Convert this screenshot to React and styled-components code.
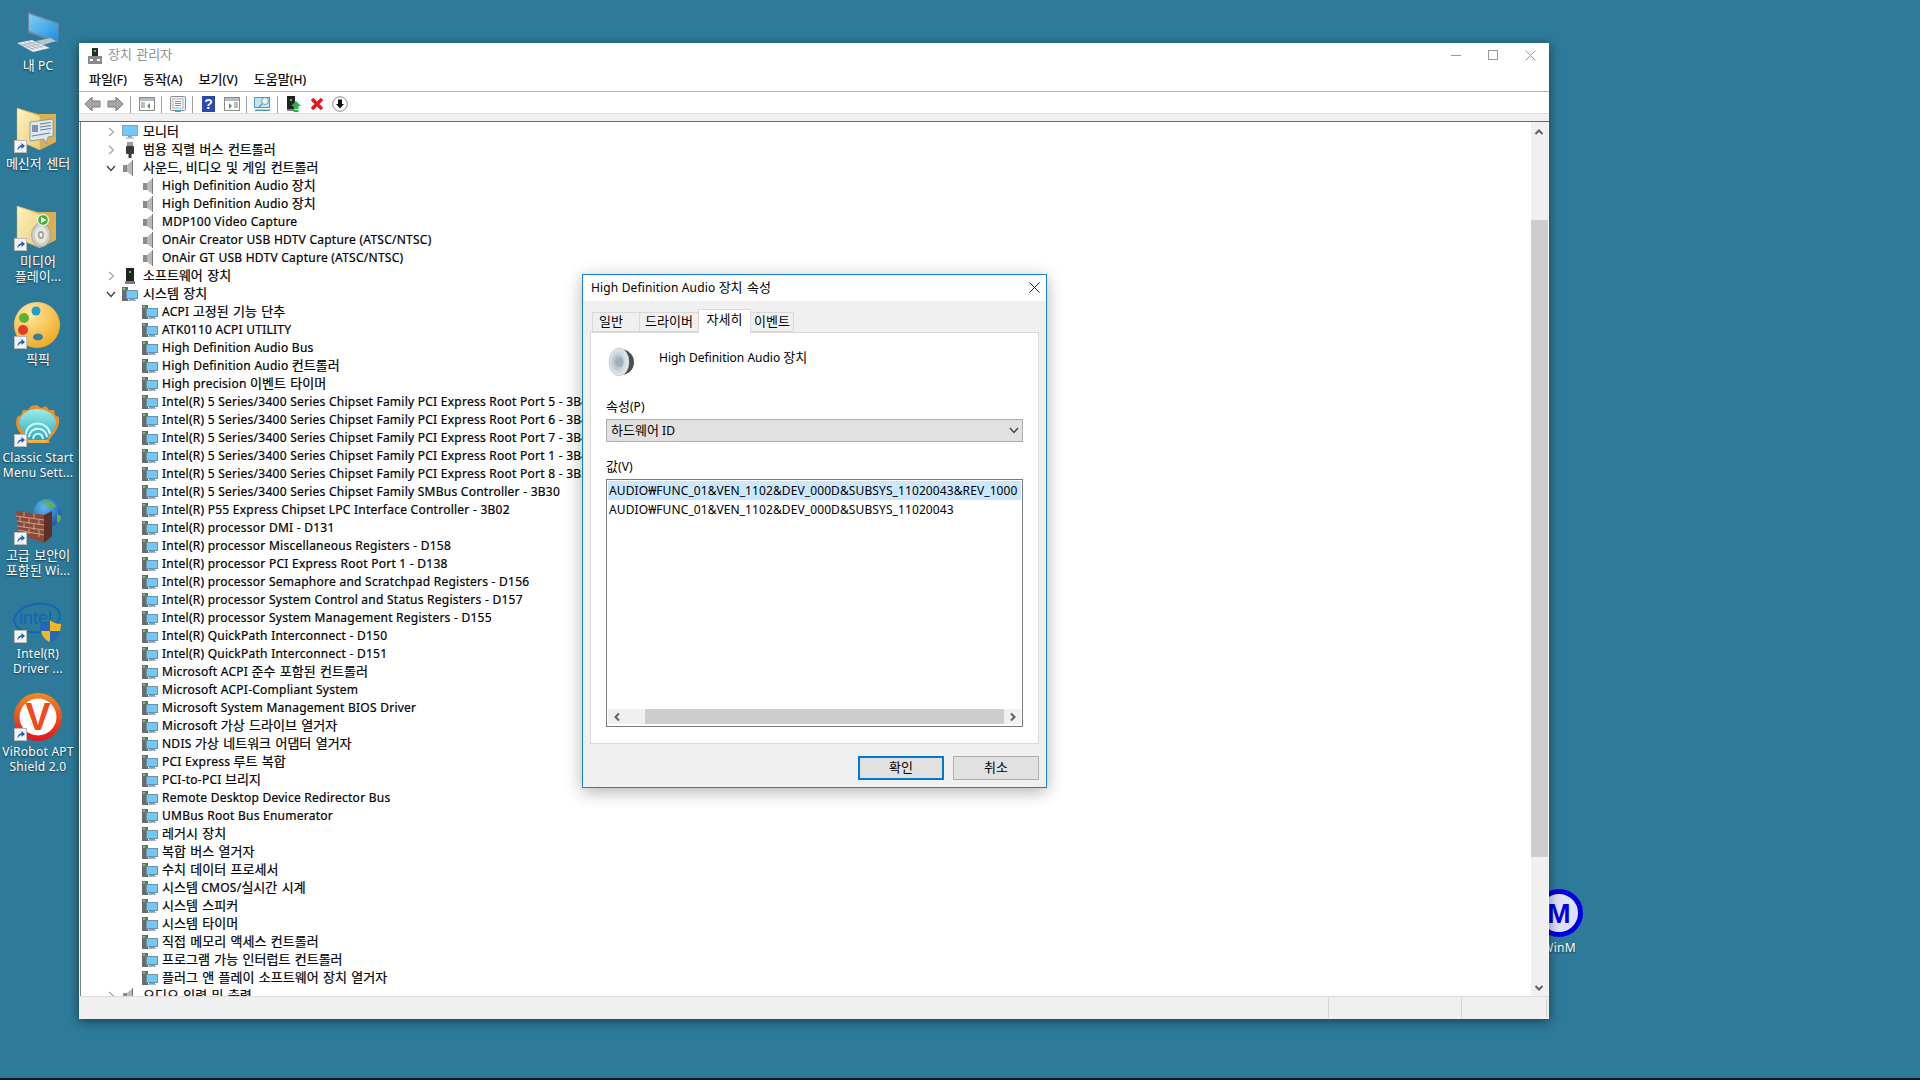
import React from "react";
import styled, { createGlobalStyle } from "styled-components";

const GlobalStyle = createGlobalStyle`
  html, body { margin: 0; padding: 0; height: 100%; overflow: hidden; }
  body {
    font-family: "Noto Sans", "Noto Sans CJK KR", sans-serif;
    font-size: 12px;
    letter-spacing: 0.25px;
    color: #000;
  }
  * { box-sizing: border-box; }
`;

/* Hangul runs are set a size up, the reference font draws them wider */
const Hangul = styled.span`
  font-size: 13px;
  line-height: 0;
  letter-spacing: 0;
  word-spacing: 1px;
`;

const Txt = ({ children }) => (
  <>
    {children.split(/([가-힣]+(?: [가-힣]+)*)/).map((part, i) =>
      i % 2 ? <Hangul key={i}>{part}</Hangul> : part
    )}
  </>
);

/* ---------- icons ---------- */

const Shortcut = () => (
  <ShortcutBadge>
    <svg width="13" height="13" viewBox="0 0 13 13">
      <rect x="0.5" y="0.5" width="12" height="12" fill="#f4f4f4" stroke="#b8b8b8" />
      <path d="M3.5 10.5 C3.5 7 5 5.5 7.5 5.2 L7.5 3 L11 6 L7.5 9 L7.5 7 C6 7 5 8 3.5 10.5 Z" fill="#1c5fb8" />
    </svg>
  </ShortcutBadge>
);

const PcIcon = () => (
  <svg width="48" height="48" viewBox="0 0 48 48">
    <defs>
      <linearGradient id="pcScreen" x1="0" y1="0" x2="1" y2="1">
        <stop offset="0" stopColor="#7fd0f7" />
        <stop offset="1" stopColor="#1d8fdc" />
      </linearGradient>
    </defs>
    <polygon points="14,2 45,13 44,33 14,23" fill="#6f8796" />
    <polygon points="15,4 44,14 43,31 15,21" fill="url(#pcScreen)" />
    <polygon points="22,31 36,28 42,31 29,35" fill="#b8c4cc" />
    <polygon points="3,33 18,30 36,38 19,42" fill="#e6eaec" />
    <path d="M6 33.5 L20 39.5 M10 32.5 L24 38.5 M14 31.5 L28 37.5 M8 35 L22 32 M12 37 L27 33.5 M16 39 L31 35.5" stroke="#9aa6ad" strokeWidth="0.7" />
  </svg>
);

const FolderBase = ({ id, children }) => (
  <svg width="48" height="48" viewBox="0 2 48 48">
    <defs>
      <linearGradient id={id} x1="0" y1="0" x2="1" y2="1">
        <stop offset="0" stopColor="#fff4bf" />
        <stop offset="1" stopColor="#eccb7a" />
      </linearGradient>
    </defs>
    <polygon points="3,2 24,8 42,8 42,36 26,44 3,34" fill="#dcb050" />
    <polygon points="3,2 26,10 26,44 3,34" fill={`url(#${id})`} stroke="#d2a750" strokeWidth="0.5" />
    {children}
  </svg>
);

const MessengerFolderIcon = () => (
  <FolderBase id="folderA">
    <polygon points="16,16 39,13 39,30 34,31 32,38 30,33 16,35" fill="#dfe8ee" stroke="#7d8f9a" strokeWidth="0.8" />
    <rect x="18" y="19" width="6" height="7" fill="#7c93a8" />
    <path d="M26 18 L37 16.500 M26 21 L37 19.500 M26 24 L37 22.500 M18 30 L36 27" stroke="#6c7f8e" strokeWidth="1" />
  </FolderBase>
);

const MediaFolderIcon = () => (
  <FolderBase id="folderB">
    <ellipse cx="27" cy="31" rx="9.500" ry="12" fill="#c9ccc8" stroke="#8d918c" strokeWidth="0.6" />
    <ellipse cx="27" cy="31" rx="6.500" ry="8.500" fill="#e6e8d8" />
    <ellipse cx="27" cy="31" rx="3" ry="4" fill="#9ea29c" />
    <ellipse cx="27" cy="31" rx="1.500" ry="2" fill="#f4f4f4" />
    <circle cx="29" cy="16" r="5.500" fill="#3fae3a" stroke="#e2f2dc" strokeWidth="1.400" />
    <polygon points="27,13 32.500,16 27,19" fill="#fff" />
  </FolderBase>
);

const PaletteIcon = () => (
  <svg width="48" height="48" viewBox="0 2 48 48">
    <defs>
      <radialGradient id="paletteFill" cx="0.35" cy="0.25" r="0.85">
        <stop offset="0" stopColor="#ffe9a0" />
        <stop offset="1" stopColor="#f0a418" />
      </radialGradient>
    </defs>
    <circle cx="23" cy="23" r="23" fill="url(#paletteFill)" />
    <circle cx="10" cy="16" r="5" fill="#5cb130" />
    <circle cx="22" cy="9" r="4.500" fill="#1f9fd0" />
    <circle cx="9" cy="28" r="5" fill="#e23a2c" />
    <ellipse cx="24" cy="35" rx="5" ry="3.500" fill="#3b7f9e" />
  </svg>
);

const ShellIcon = () => (
  <svg width="48" height="48" viewBox="0 0 48 48">
    <defs>
      <linearGradient id="shellFill" x1="0" y1="0" x2="0" y2="1">
        <stop offset="0" stopColor="#9deee6" />
        <stop offset="1" stopColor="#25a9c7" />
      </linearGradient>
    </defs>
    <path d="M23 3 L27 6 L32 4 L35 8 L40 8 L41 13 L45 15 L45 21 C44 28 38 34 35 38 L36 41 L12 41 L13 38 C8 33 2 28 2 20 L3 15 L7 13 L9 8 L14 8 L17 4 Z" fill="#e88f2c" />
    <path d="M23 7 C33 7 42 13 42 21 C41 27 36 32 33 38 L15 38 C12 32 6 27 5 21 C5 13 14 7 23 7 Z" fill="url(#shellFill)" />
    <path d="M12 32 C13 18 34 18 36 32 M15 35 C16 24 32 24 33 35 M19 37 C20 30 28 30 29 37" stroke="#d4fbf6" strokeWidth="2" fill="none" />
    <path d="M14 38 L34 38 L33 41 L15 41 Z" fill="#f5b04a" />
  </svg>
);

const WallIcon = () => (
  <svg width="48" height="48" viewBox="0 0 48 48">
    <defs>
      <radialGradient id="globeFill" cx="0.4" cy="0.3" r="0.8">
        <stop offset="0" stopColor="#5fb9f0" />
        <stop offset="1" stopColor="#0f4f9e" />
      </radialGradient>
    </defs>
    <circle cx="33" cy="13" r="14" fill="url(#globeFill)" />
    <path d="M28 1 C33 0 40 2 42 7 L37 8 L32 5 Z M43 14 L47 16 C47 20 45 22 43 23 Z" fill="#63b34a" />
    <polygon points="2,11 30,15 30,43 4,34" fill="#8e4a38" />
    <polygon points="30,15 38,11 38,36 30,43" fill="#5e2f25" />
    <path d="M2 16 L30 20 M3 21 L30 25 M3 26 L30 30 M4 30 L30 35 M10 12 L10 18 M20 13.500 L20 19 M6 17 L6 22 M15 18 L15 24 M25 19 L25 25 M10 23 L10 28 M20 24 L20 30 M15 29 L15 34 M25 30 L25 37" stroke="#caa08e" strokeWidth="1" />
  </svg>
);

const IntelIcon = () => (
  <svg width="48" height="48" viewBox="0 0 48 48">
    <ellipse cx="23" cy="20" rx="23" ry="14" fill="none" stroke="#0f66b5" strokeWidth="1.800" transform="rotate(-10 23 20)" />
    <text x="5" y="26" fontFamily="'Liberation Sans', sans-serif" fontSize="18" letterSpacing="0" fill="#0f66b5">intel</text>
    <g transform="translate(0 17)">
      <path d="M26 9 C31 9 35 7 36 5 C38 7 42 9 47 9 C47 19 44 24 36 27 C29 24 26 19 26 9 Z" fill="#2566b8" />
      <path d="M36 5 C38 7 42 9 47 9 C47 12 46.500 14 46 16 L36 16 Z M36 16 L36 27 C31 25 28 21 27 16 Z" fill="#f4b81f" />
    </g>
  </svg>
);

const VirobotIcon = () => (
  <svg width="48" height="48" viewBox="0 3 48 48">
    <defs>
      <linearGradient id="viroFill" x1="0" y1="0" x2="0" y2="1">
        <stop offset="0" stopColor="#f58a1e" />
        <stop offset="1" stopColor="#e3141c" />
      </linearGradient>
    </defs>
    <circle cx="24" cy="24" r="24" fill="url(#viroFill)" />
    <circle cx="24" cy="24" r="18.500" fill="#fff" />
    <text x="24" y="37" textAnchor="middle" fontFamily="'Liberation Sans', sans-serif" fontWeight="700" fontSize="38" letterSpacing="0" fill="#ef4a1c">V</text>
  </svg>
);

const WinmIcon = () => (
  <svg width="48" height="48" viewBox="0 3 48 48">
    <circle cx="24" cy="24" r="21.500" fill="#dfe0fb" stroke="#0000e0" strokeWidth="5" />
    <text x="24" y="34" textAnchor="middle" fontFamily="'Liberation Sans', sans-serif" fontWeight="700" fontSize="28" letterSpacing="0" fill="#0000e0">M</text>
  </svg>
);

const TreeMonitor = () => (
  <svg width="16" height="16" viewBox="0 0 16 16">
    <rect x="0.5" y="1.500" width="15" height="10" fill="#6fc8f5" stroke="#8aa4b4" />
    <rect x="6" y="12" width="4" height="1.500" fill="#8aa4b4" />
    <rect x="4" y="13.500" width="8" height="1" fill="#8aa4b4" />
  </svg>
);

const TreeUsb = () => (
  <svg width="16" height="16" viewBox="0 0 16 16">
    <rect x="5" y="0" width="6" height="4" fill="#9a9a9a" />
    <rect x="4" y="4" width="8" height="8" rx="1" fill="#3a3a3a" />
    <rect x="6.500" y="12" width="3" height="4" fill="#3a3a3a" />
  </svg>
);

const TreeSpeaker = () => (
  <svg width="16" height="16" viewBox="0 0 16 16">
    <rect x="1" y="5" width="4" height="7" fill="#8b8b8b" />
    <polygon points="5,5 11,0 11,16 5,12" fill="#b9b9b9" />
    <rect x="10" y="0" width="1" height="16" fill="#7a7a7a" />
  </svg>
);

const TreeDevice = () => (
  <svg width="16" height="16" viewBox="0 0 16 16">
    <rect x="4" y="0" width="8" height="13" fill="#222" />
    <rect x="7" y="3" width="2" height="2" fill="#46d846" />
    <rect x="3" y="13" width="10" height="3" fill="#7d7d7d" />
  </svg>
);

const TreeSystem = () => (
  <svg width="16" height="16" viewBox="0 0 16 16">
    <rect x="0" y="1" width="6" height="14" fill="#6b6b6b" />
    <rect x="1" y="2" width="2" height="2" fill="#6ed36e" />
    <rect x="4.500" y="4.500" width="11" height="8" fill="#6fc8f5" stroke="#6b93aa" />
    <rect x="7" y="13" width="6" height="1" fill="#7c9db0" />
    <rect x="6" y="14" width="8" height="1" fill="#9fb7c4" />
  </svg>
);

const Arrow = ({ flip }) => (
  <svg width="17" height="16" viewBox="0 0 17 16">
    <path d={flip ? "M1 5 L9 5 L9 1 L16 8 L9 15 L9 11 L1 11 Z" : "M16 5 L8 5 L8 1 L1 8 L8 15 L8 11 L16 11 Z"} fill="#a6a6a6" stroke="#7b7b7b" />
  </svg>
);

const PaneIcon = ({ accent, side }) => (
  <svg width="16" height="16" viewBox="0 0 16 16">
    <rect x="0.500" y="1.500" width="15" height="13" fill="#fff" stroke="#8b8b8b" />
    <rect x="1" y="2" width="14" height="3" fill="#b7bcc2" />
    <path d={side === "left" ? "M2 7 H6 M2 9 H6 M2 11 H6" : "M10 7 H14 M10 9 H14 M10 11 H14"} stroke="#7d7d7d" />
    <polygon points={side === "left" ? "11,7 11,13 8,10" : "5,7 5,13 8,10"} fill={accent} />
  </svg>
);

const PropsIcon = () => (
  <svg width="16" height="16" viewBox="0 0 16 16">
    <rect x="0.500" y="0.500" width="15" height="14" rx="1" fill="#eef0f2" stroke="#8b8f94" />
    <rect x="3" y="3" width="10" height="9" fill="#fff" stroke="#b0b4b8" />
    <path d="M5 5.500 H11 M5 7.500 H11 M5 9.500 H11" stroke="#8b8f94" />
    <rect x="5" y="14" width="6" height="2" fill="#3fa7e0" />
  </svg>
);

const HelpIcon = () => (
  <svg width="13" height="16" viewBox="0 0 13 16">
    <rect width="13" height="16" fill="#2c49ad" />
    <text x="6.500" y="13" textAnchor="middle" fontFamily="'Liberation Sans', sans-serif" fontWeight="700" fontSize="14" letterSpacing="0" fill="#fff">?</text>
  </svg>
);

const ScanIcon = () => (
  <svg width="17" height="16" viewBox="0 0 17 16">
    <rect x="0.500" y="1.500" width="15" height="10" fill="#bfe6f8" stroke="#4b97c4" />
    <rect x="1" y="13.500" width="15" height="1.500" fill="#4b97c4" />
    <circle cx="11" cy="5" r="3.500" fill="#e8f7fd" stroke="#6d9fb8" />
    <path d="M8.500 7.500 L4 12" stroke="#8c8c8c" strokeWidth="1.500" />
  </svg>
);

const UpdateIcon = () => (
  <svg width="14" height="16" viewBox="0 0 14 16">
    <rect x="0" y="0" width="8" height="13" fill="#222" />
    <rect x="3" y="3" width="2" height="2" fill="#46d846" />
    <rect x="0" y="13" width="8" height="2" fill="#7d7d7d" />
    <polygon points="9,5 14,10 11.500,10 11.500,13 6.500,13 6.500,10 4,10" fill="#27b34a" />
    <rect x="6.500" y="14" width="5" height="2" fill="#27b34a" />
  </svg>
);

const RemoveIcon = () => (
  <svg width="14" height="14" viewBox="0 0 14 14">
    <path d="M2 2 L12 12 M12 2 L2 12" stroke="#e8131c" strokeWidth="3.400" />
  </svg>
);

const DisableIcon = () => (
  <svg width="16" height="16" viewBox="0 0 16 16">
    <circle cx="8" cy="8" r="7.300" fill="#fff" stroke="#8b8b8b" />
    <polygon points="6,3.500 10,3.500 10,8 12,8 8,12.500 4,8 6,8" fill="#111" />
  </svg>
);

const ChevronRight = () => (
  <svg width="7" height="10" viewBox="0 0 7 10">
    <path d="M1 1 L5.500 5 L1 9" fill="none" stroke="#a6a6a6" strokeWidth="1.300" />
  </svg>
);

const ChevronDown = () => (
  <svg width="10" height="7" viewBox="0 0 10 7">
    <path d="M1 1 L5 5.500 L9 1" fill="none" stroke="#404040" strokeWidth="1.300" />
  </svg>
);

const ScrollChevron = ({ dir }) => {
  const paths = {
    up: "M1.500 6 L5 2.500 L8.500 6",
    down: "M1.500 2 L5 5.500 L8.500 2",
    left: "M6 1.500 L2.500 5 L6 8.500",
    right: "M2 1.500 L5.500 5 L2 8.500",
  };
  const vertical = dir === "up" || dir === "down";
  return (
    <svg width={vertical ? 10 : 8} height={vertical ? 8 : 10} viewBox={vertical ? "0 0 10 8" : "0 0 8 10"}>
      <path d={paths[dir]} fill="none" stroke="#606060" strokeWidth="2" />
    </svg>
  );
};

const DialogSpeaker = () => (
  <svg width="27" height="30" viewBox="0 0 27 30">
    <defs>
      <radialGradient id="coneFill" cx="0.45" cy="0.5" r="0.6">
        <stop offset="0" stopColor="#8fa0aa" />
        <stop offset="0.5" stopColor="#c9d4da" />
        <stop offset="1" stopColor="#f2f5f6" />
      </radialGradient>
    </defs>
    <path d="M12 2 C20 2 26 8 26 15 C26 23 20 28 13 28 Z" fill="#4b4d50" />
    <ellipse cx="11" cy="15" rx="10" ry="14" fill="url(#coneFill)" stroke="#b7bdc1" strokeWidth="0.6" />
    <ellipse cx="12" cy="15" rx="3.500" ry="5" fill="#9fb0ba" />
  </svg>
);

const AppWindowIcon = () => (
  <svg width="14" height="16" viewBox="0 0 14 16">
    <rect x="4" y="0" width="6" height="8" fill="#2a2a2a" />
    <rect x="6" y="2" width="2" height="2" fill="#46d846" />
    <rect x="0" y="8" width="14" height="8" fill="#8a8a8a" />
    <rect x="2" y="11" width="3" height="2" fill="#fff" />
    <rect x="9" y="11" width="3" height="2" fill="#fff" />
  </svg>
);

/* ---------- data ---------- */

const desktopIcons = [
  { label: "내 PC", icon: <PcIcon />, plain: true },
  { label: "메신저 센터", icon: <MessengerFolderIcon /> },
  { label: "미디어 플레이...", icon: <MediaFolderIcon /> },
  { label: "픽픽", icon: <PaletteIcon /> },
  { label: "Classic Start Menu Sett...", icon: <ShellIcon /> },
  { label: "고급 보안이 포함된 Wi...", icon: <WallIcon /> },
  { label: "Intel(R) Driver ...", icon: <IntelIcon /> },
  { label: "ViRobot APT Shield 2.0", icon: <VirobotIcon /> },
];

const systemDevices = [
  "ACPI 고정된 기능 단추",
  "ATK0110 ACPI UTILITY",
  "High Definition Audio Bus",
  "High Definition Audio 컨트롤러",
  "High precision 이벤트 타이머",
  "Intel(R) 5 Series/3400 Series Chipset Family PCI Express Root Port 5 - 3B4A",
  "Intel(R) 5 Series/3400 Series Chipset Family PCI Express Root Port 6 - 3B4C",
  "Intel(R) 5 Series/3400 Series Chipset Family PCI Express Root Port 7 - 3B4E",
  "Intel(R) 5 Series/3400 Series Chipset Family PCI Express Root Port 1 - 3B42",
  "Intel(R) 5 Series/3400 Series Chipset Family PCI Express Root Port 8 - 3B50",
  "Intel(R) 5 Series/3400 Series Chipset Family SMBus Controller - 3B30",
  "Intel(R) P55 Express Chipset LPC Interface Controller - 3B02",
  "Intel(R) processor DMI - D131",
  "Intel(R) processor Miscellaneous Registers - D158",
  "Intel(R) processor PCI Express Root Port 1 - D138",
  "Intel(R) processor Semaphore and Scratchpad Registers - D156",
  "Intel(R) processor System Control and Status Registers - D157",
  "Intel(R) processor System Management Registers - D155",
  "Intel(R) QuickPath Interconnect - D150",
  "Intel(R) QuickPath Interconnect - D151",
  "Microsoft ACPI 준수 포함된 컨트롤러",
  "Microsoft ACPI-Compliant System",
  "Microsoft System Management BIOS Driver",
  "Microsoft 가상 드라이브 열거자",
  "NDIS 가상 네트워크 어댑터 열거자",
  "PCI Express 루트 복합",
  "PCI-to-PCI 브리지",
  "Remote Desktop Device Redirector Bus",
  "UMBus Root Bus Enumerator",
  "레거시 장치",
  "복합 버스 열거자",
  "수치 데이터 프로세서",
  "시스템 CMOS/실시간 시계",
  "시스템 스피커",
  "시스템 타이머",
  "직접 메모리 액세스 컨트롤러",
  "프로그램 가능 인터럽트 컨트롤러",
  "플러그 앤 플레이 소프트웨어 장치 열거자",
];

const soundDevices = [
  "High Definition Audio 장치",
  "High Definition Audio 장치",
  "MDP100 Video Capture",
  "OnAir Creator USB HDTV Capture (ATSC/NTSC)",
  "OnAir GT USB HDTV Capture (ATSC/NTSC)",
];

/* ---------- tree ---------- */

const Category = ({ open, icon, children }) => (
  <TreeRow $level={1}>
    <Expander>{open ? <ChevronDown /> : <ChevronRight />}</Expander>
    {icon}
    <RowLabel $gap={5}><Txt>{children}</Txt></RowLabel>
  </TreeRow>
);

const Device = ({ icon, children }) => (
  <TreeRow $level={2}>
    {icon}
    <RowLabel $gap={4}><Txt>{children}</Txt></RowLabel>
  </TreeRow>
);

const App = () => {
  return (
    <Desktop>
      <GlobalStyle />
      <IconColumn>
        {desktopIcons.map((item) => (
          <Tile key={item.label}>
            <TileIcon>
              {item.icon}
              {!item.plain && <Shortcut />}
            </TileIcon>
            <TileLabel><Txt>{item.label}</Txt></TileLabel>
          </Tile>
        ))}
      </IconColumn>

      <FarTile>
        <TileIcon>
          <WinmIcon />
        </TileIcon>
        <TileLabel>WinM</TileLabel>
      </FarTile>

      <ManagerWindow>
        <TitleBar>
          <AppWindowIcon />
          <TitleText><Txt>장치 관리자</Txt></TitleText>
          <CaptionButtons>
            <CaptionButton>
              <svg width="11" height="11" viewBox="0 0 11 11"><path d="M0 5.500 H10" stroke="#999" /></svg>
            </CaptionButton>
            <CaptionButton>
              <svg width="11" height="11" viewBox="0 0 11 11"><rect x="0.500" y="0.500" width="9" height="9" fill="none" stroke="#999" /></svg>
            </CaptionButton>
            <CaptionButton>
              <svg width="11" height="11" viewBox="0 0 11 11"><path d="M0.500 0.500 L10.500 10.500 M10.500 0.500 L0.500 10.500" stroke="#999" /></svg>
            </CaptionButton>
          </CaptionButtons>
        </TitleBar>

        <MenuBar>
          <MenuItem><Txt>파일(F)</Txt></MenuItem>
          <MenuItem><Txt>동작(A)</Txt></MenuItem>
          <MenuItem><Txt>보기(V)</Txt></MenuItem>
          <MenuItem><Txt>도움말(H)</Txt></MenuItem>
        </MenuBar>

        <Toolbar>
          <ToolButton><Arrow /></ToolButton>
          <ToolButton><Arrow flip /></ToolButton>
          <ToolSeparator />
          <ToolButton><PaneIcon side="left" accent="#35b04a" /></ToolButton>
          <ToolSeparator />
          <ToolButton><PropsIcon /></ToolButton>
          <ToolSeparator />
          <ToolButton><HelpIcon /></ToolButton>
          <ToolButton><PaneIcon side="right" accent="#35b04a" /></ToolButton>
          <ToolSeparator />
          <ToolButton><ScanIcon /></ToolButton>
          <ToolSeparator />
          <ToolButton><UpdateIcon /></ToolButton>
          <ToolButton><RemoveIcon /></ToolButton>
          <ToolButton><DisableIcon /></ToolButton>
        </Toolbar>

        <ToolbarGap />

        <TreePane>
          <TreeScroll>
            <Category icon={<TreeMonitor />}>모니터</Category>
            <Category icon={<TreeUsb />}>범용 직렬 버스 컨트롤러</Category>
            <Category open icon={<TreeSpeaker />}>사운드, 비디오 및 게임 컨트롤러</Category>
            {soundDevices.map((name, i) => (
              <Device key={i} icon={<TreeSpeaker />}>{name}</Device>
            ))}
            <Category icon={<TreeDevice />}>소프트웨어 장치</Category>
            <Category open icon={<TreeSystem />}>시스템 장치</Category>
            {systemDevices.map((name) => (
              <Device key={name} icon={<TreeSystem />}>{name}</Device>
            ))}
            <Category icon={<TreeSpeaker />}>오디오 입력 및 출력</Category>
          </TreeScroll>
          <VScrollBar>
            <ScrollCap $top={2}><ScrollChevron dir="up" /></ScrollCap>
            <VTrack><VThumb /></VTrack>
            <ScrollCap><ScrollChevron dir="down" /></ScrollCap>
          </VScrollBar>
        </TreePane>

        <StatusBar>
          <StatusCell />
          <StatusCell $width={133} />
          <StatusCell $width={85} />
        </StatusBar>
      </ManagerWindow>

      <Dialog>
        <DialogTitle>
          <span><Txt>High Definition Audio 장치 속성</Txt></span>
          <svg width="11" height="11" viewBox="0 0 11 11"><path d="M0.500 0.500 L10.500 10.500 M10.500 0.500 L0.500 10.500" stroke="#222" /></svg>
        </DialogTitle>
        <DialogBody>
          <Tabs>
            <Tab $width={48} $inset={10}><Txt>일반</Txt></Tab>
            <Tab $width={60}><Txt>드라이버</Txt></Tab>
            <Tab $width={53} $active><Txt>자세히</Txt></Tab>
            <Tab $width={44}><Txt>이벤트</Txt></Tab>
          </Tabs>
          <TabPanel>
            <DeviceHeader>
              <DialogSpeaker />
              <DeviceName><Txt>High Definition Audio 장치</Txt></DeviceName>
            </DeviceHeader>
            <FieldLabel><Txt>속성(P)</Txt></FieldLabel>
            <SelectBox>
              <SelectText><Txt>하드웨어 ID</Txt></SelectText>
              <ChevronDown />
            </SelectBox>
            <ValueLabel><Txt>값(V)</Txt></ValueLabel>
            <ListBox>
              <ListRows>
                <ListRow $selected>AUDIO₩FUNC_01&amp;VEN_1102&amp;DEV_000D&amp;SUBSYS_11020043&amp;REV_1000</ListRow>
                <ListRow>AUDIO₩FUNC_01&amp;VEN_1102&amp;DEV_000D&amp;SUBSYS_11020043</ListRow>
              </ListRows>
              <HScrollBar>
                <HCap><ScrollChevron dir="left" /></HCap>
                <HTrack><HThumb /></HTrack>
                <HCap><ScrollChevron dir="right" /></HCap>
              </HScrollBar>
            </ListBox>
          </TabPanel>
          <DialogFooter>
            <PushButton $primary><Txt>확인</Txt></PushButton>
            <PushButton><Txt>취소</Txt></PushButton>
          </DialogFooter>
        </DialogBody>
      </Dialog>
    </Desktop>
  );
};

/* ---------- desktop ---------- */

const Desktop = styled.div`
  position: relative;
  width: 1920px;
  height: 1080px;
  overflow: hidden;
  background: #2d7a9a;
  border-bottom: 2px solid #0b1a20;
`;

const IconColumn = styled.div`
  display: flex;
  flex-direction: column;
  width: 76px;
`;

const Tile = styled.div`
  width: 76px;
  height: 98px;
  padding-top: 10px;
  display: flex;
  flex-direction: column;
  align-items: center;
`;

const FarTile = styled(Tile)`
  position: absolute;
  left: 1521px;
  top: 882px;
`;

const TileIcon = styled.div`
  position: relative;
  width: 48px;
  height: 48px;

  svg {
    overflow: visible;
  }
`;

const ShortcutBadge = styled.div`
  position: absolute;
  left: 0;
  bottom: 3px;
  line-height: 0;
`;

const TileLabel = styled.div`
  width: 76px;
  color: #fff;
  text-align: center;
  line-height: 15px;
  word-break: keep-all;
  text-shadow: 0 1px 2px rgba(0, 0, 0, 0.6);
`;

/* ---------- device manager window ---------- */

const ManagerWindow = styled.div`
  position: absolute;
  left: 79px;
  top: 43px;
  width: 1470px;
  height: 976px;
  background: #fff;
  display: flex;
  flex-direction: column;
  box-shadow: 0 2px 10px rgba(0, 0, 0, 0.5);
`;

const TitleBar = styled.div`
  height: 25px;
  flex: none;
  display: flex;
  align-items: center;
  padding-left: 9px;
`;

const TitleText = styled.div`
  margin-left: 6px;
  padding-bottom: 2px;
  color: #8f8f8f;
`;

const CaptionButtons = styled.div`
  margin-left: auto;
  display: flex;
`;

const CaptionButton = styled.div`
  width: 37px;
  display: flex;
  justify-content: center;
  line-height: 0;
`;

const MenuBar = styled.div`
  height: 24px;
  flex: none;
  display: flex;
  align-items: center;
  gap: 16px;
  padding-left: 10px;
  border-bottom: 1px solid #b4b6c2;
  -webkit-text-stroke: 0.2px #000;
`;

const MenuItem = styled.div`
  line-height: 22px;
`;

const Toolbar = styled.div`
  height: 22px;
  flex: none;
  display: flex;
  align-items: center;
  padding: 3px 0 0 2px;
  border-bottom: 1px solid #dcdcdc;
`;

const ToolButton = styled.div`
  width: 23px;
  display: flex;
  justify-content: center;
  line-height: 0;
`;

const ToolSeparator = styled.div`
  width: 1px;
  height: 17px;
  margin: 0 4px 0 3px;
  background: #a0a0a0;
`;

const ToolbarGap = styled.div`
  height: 8px;
  flex: none;
  background: #f0f0f0;
  border-bottom: 1px solid #696969;
`;

const TreePane = styled.div`
  flex: 1;
  min-height: 0;
  display: flex;
  margin-left: 1px;
  border-left: 1px solid #808080;
`;

const TreeScroll = styled.div`
  flex: 1;
  padding-top: 1px;
  overflow: hidden;
  -webkit-text-stroke: 0.2px #000;
`;

const TreeRow = styled.div`
  height: 18px;
  display: flex;
  align-items: center;
  white-space: nowrap;
  padding-left: ${({ $level }) => ($level === 1 ? 22 : 61)}px;
`;

const Expander = styled.div`
  width: 16px;
  margin-right: 3px;
  display: flex;
  justify-content: center;
  line-height: 0;
`;

const RowLabel = styled.span`
  margin-left: ${({ $gap }) => $gap}px;
  line-height: 18px;
`;

const VScrollBar = styled.div`
  width: 17px;
  margin-right: 1px;
  flex: none;
  display: flex;
  flex-direction: column;
  background: #f0f0f0;
`;

const ScrollCap = styled.div`
  height: 17px;
  flex: none;
  padding: ${({ $top }) => $top || 0}px 2px 0 0;
  display: flex;
  align-items: center;
  justify-content: center;
  line-height: 0;
`;

const VTrack = styled.div`
  flex: 1;
  padding-top: 81px;
`;

const VThumb = styled.div`
  height: 637px;
  background: #cdcdcd;
`;

const StatusBar = styled.div`
  height: 23px;
  flex: none;
  display: flex;
  justify-content: flex-end;
  padding-right: 2px;
  background: #f0f0f0;
  border-top: 1px solid #dcdcdc;
`;

const StatusCell = styled.div`
  flex: ${({ $width }) => ($width ? `0 0 ${$width}px` : 1)};
  margin: 1px 0;
  border-right: 1px solid #d4d4d4;
`;

/* ---------- properties dialog ---------- */

const Dialog = styled.div`
  position: absolute;
  left: 582px;
  top: 274px;
  width: 465px;
  height: 514px;
  display: flex;
  flex-direction: column;
  border: 1px solid #1a82d4;
  background: #f0f0f0;
  letter-spacing: 0.1px;
  box-shadow: 0 4px 16px rgba(0, 0, 0, 0.3);
`;

const DialogTitle = styled.div`
  height: 26px;
  flex: none;
  display: flex;
  align-items: center;
  justify-content: space-between;
  padding: 0 6px 1px 8px;
  background: #fff;
  letter-spacing: 0.15px;
`;

const DialogBody = styled.div`
  flex: 1;
  display: flex;
  flex-direction: column;
  padding: 8px 7px 0;
`;

const Tabs = styled.div`
  height: 23px;
  flex: none;
  display: flex;
  align-items: flex-end;
  padding-left: 3px;
  position: relative;
  z-index: 1;
`;

const Tab = styled.div`
  width: ${({ $width }) => $width}px;
  height: ${({ $active }) => ($active ? 24 : 20)}px;
  margin-bottom: ${({ $active }) => ($active ? -1 : 0)}px;
  margin-left: -1px;
  padding-bottom: ${({ $active }) => ($active ? 5 : 3)}px;
  padding-right: ${({ $inset }) => $inset || 0}px;
  display: flex;
  align-items: center;
  justify-content: center;
  background: ${({ $active }) => ($active ? "#fff" : "#f0f0f0")};
  border: 1px solid #d9d9d9;
  border-bottom: ${({ $active }) => ($active ? "none" : "1px solid #d9d9d9")};
`;

const TabPanel = styled.div`
  height: 412px;
  flex: none;
  display: flex;
  flex-direction: column;
  padding: 14px 15px 0;
  background: #fff;
  border: 1px solid #d9d9d9;
`;

const DeviceHeader = styled.div`
  height: 30px;
  flex: none;
  display: flex;
  align-items: center;
  padding-left: 2px;
`;

const DeviceName = styled.div`
  margin-left: 24px;
  margin-bottom: 10px;
  letter-spacing: 0;
`;

const FieldLabel = styled.div`
  margin-top: 22px;
  line-height: 16px;
`;

const SelectBox = styled.div`
  height: 23px;
  margin-top: 4px;
  flex: none;
  display: flex;
  align-items: center;
  justify-content: space-between;
  padding: 0 3px 0 4px;
  background: #e1e1e1;
  border: 1px solid #adadad;
`;

const SelectText = styled.span`
  padding-bottom: 1px;
`;

const ValueLabel = styled(FieldLabel)`
  margin-top: 17px;
`;

const ListBox = styled.div`
  height: 248px;
  margin-top: 4px;
  flex: none;
  display: flex;
  flex-direction: column;
  padding: 1px 1px 2px;
  border: 1px solid #7a7a7a;
`;

const ListRows = styled.div`
  flex: 1;
  overflow: hidden;
`;

const ListRow = styled.div`
  height: 19px;
  line-height: 20px;
  padding-left: 1px;
  white-space: nowrap;
  background: ${({ $selected }) => ($selected ? "#cce8ff" : "transparent")};
`;

const HScrollBar = styled.div`
  height: 15px;
  flex: none;
  display: flex;
  background: #f0f0f0;
`;

const HCap = styled.div`
  width: 17px;
  flex: none;
  display: flex;
  align-items: center;
  justify-content: center;
  line-height: 0;
`;

const HTrack = styled.div`
  flex: 1;
  padding-left: 20px;
`;

const HThumb = styled.div`
  height: 100%;
  background: #cdcdcd;
`;

const DialogFooter = styled.div`
  display: flex;
  justify-content: flex-end;
  gap: 9px;
  margin-top: 12px;
`;

const PushButton = styled.div`
  width: 86px;
  height: 24px;
  padding-bottom: 2px;
  display: flex;
  align-items: center;
  justify-content: center;
  background: #e1e1e1;
  border: ${({ $primary }) => ($primary ? "2px solid #0078d7" : "1px solid #adadad")};
`;

export default App;
